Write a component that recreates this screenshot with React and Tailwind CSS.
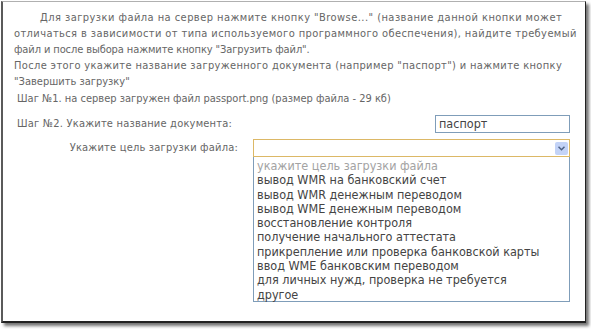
import React from "react";

const purposes = [
    "вывод WMR на банковский счет",
    "вывод WMR денежным переводом",
    "вывод WME денежным переводом",
    "восстановление контроля",
    "получение начального аттестата",
    "прикрепление или проверка банковской карты",
    "ввод WME банковским переводом",
    "для личных нужд, проверка не требуется",
    "другое",
];

const App = () => {
    return (
        <div className="w-[591px] h-[329px] bg-white overflow-hidden pt-px pl-px" style={{ fontFamily: '"DejaVu Sans Condensed", "DejaVu Sans", Verdana, sans-serif' }}>
            <div className="w-[585px] h-[322px] bg-white border-l-2 border-l-[#5a5a5a] border-t border-t-[#b0b0b0] border-r border-r-[#222] border-b-2 border-b-[#222] shadow-[3px_3px_3px_rgba(0,0,0,0.55)] pt-[8px] pl-[11px] pr-[15px] text-[#666]">
                {/* Instructions */}
                <p className="text-[11px] leading-[16px] whitespace-nowrap">
                    <span className="pl-[26px] tracking-[0.45px]">Для загрузки файла на сервер нажмите кнопку "Browse..." (название данной кнопки может</span>
                    <br />
                    <span className="tracking-[0.4px]">отличаться в зависимости от типа используемого программного обеспечения), найдите требуемый</span>
                    <br />
                    <span className="tracking-[-0.1px]">файл и после выбора нажмите кнопку "Загрузить файл".</span>
                    <br />
                    <span className="tracking-[0.35px]">После этого укажите название загруженного документа (например "паспорт") и нажмите кнопку</span>
                    <br />
                    "Завершить загрузку"
                </p>

                <div className="pl-[3px] mt-px text-[11px] leading-[16px]">
                    Шаг №1. на сервер загружен файл passport.png (размер файла - 29 кб)
                </div>

                {/* Step 2 */}
                <div className="flex items-center justify-between mt-[8px] h-[18px] pl-[3px] text-[11px]">
                    <span className="tracking-[0.2px]">Шаг №2. Укажите название документа:</span>
                    <div className="w-[135px] h-[18px] border border-[#7f9db9] pl-[3px] text-[12.5px] leading-[16px] text-[#444]">
                        паспорт
                    </div>
                </div>

                {/* Purpose select */}
                <div className="flex mt-[6px]">
                    <div className="w-[224px] text-right text-[11px] leading-[18px] tracking-[0.2px] shrink-0">Укажите цель загрузки файла:</div>
                    <div className="ml-[15px] flex-1 flex flex-col">
                        <div className="h-[18px] border border-[#dcb866] flex justify-end items-center pr-px">
                            <div className="w-[13px] h-[13px] bg-[#c3d3f7] rounded-[2px] flex items-center justify-center">
                                <svg width="7" height="5" viewBox="0 0 7 5">
                                    <path d="M0.5 0.8 L3.5 3.8 L6.5 0.8" fill="none" stroke="#4d6185" strokeWidth="1.5" />
                                </svg>
                            </div>
                        </div>
                        <div className="h-[145px] border border-t-0 border-[#7f9db9] pl-[3px] pt-[2px] text-[12.5px] leading-[14.3px] text-[#444] whitespace-nowrap">
                            <div className="text-[#a3a3a3]">укажите цель загрузки файла</div>
                            {purposes.map((p) => (
                                <div key={p}>{p}</div>
                            ))}
                        </div>
                    </div>
                </div>
            </div>
        </div>
    );
};

export default App;
